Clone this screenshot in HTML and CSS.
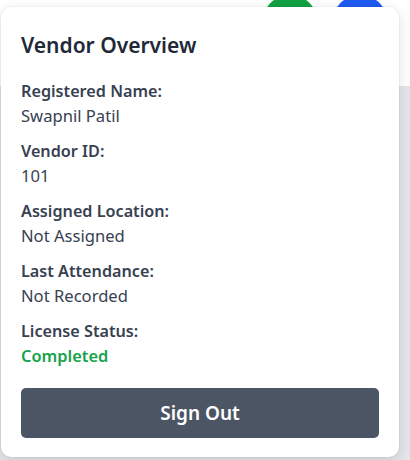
FILE: index.html
```html
<!DOCTYPE html>
<html>
<head>
<meta charset="utf-8">
<link rel="stylesheet" href="styles.css">
</head>
<body>
<div class="app">
  <header class="topbar">
    <span class="avatar avatar-green"></span>
    <span class="avatar avatar-blue"></span>
  </header>
  <main class="content"></main>
  <section class="popover">
    <h2 class="title">Vendor Overview</h2>
    <dl class="details">
      <div class="item"><dt>Registered Name:</dt><dd>Swapnil Patil</dd></div>
      <div class="item"><dt>Vendor ID:</dt><dd>101</dd></div>
      <div class="item"><dt>Assigned Location:</dt><dd>Not Assigned</dd></div>
      <div class="item"><dt>Last Attendance:</dt><dd>Not Recorded</dd></div>
      <div class="item"><dt>License Status:</dt><dd class="ok">Completed</dd></div>
    </dl>
    <button class="signout">Sign Out</button>
  </section>
</div>
</body>
</html>
```
FILE: styles.css
```css
* { box-sizing: border-box; }
html, body { margin: 0; padding: 0; }
body {
  width: 410px;
  height: 460px;
  overflow: hidden;
  font-family: "Noto Sans", "Open Sans", sans-serif;
  background: #ffffff;
}
.app {
  position: relative;
  width: 410px;
  height: 460px;
  display: flex;
  flex-direction: column;
}
.topbar {
  height: 91px;
  margin-top: -5px;
  background: #ffffff;
  display: flex;
  justify-content: flex-end;
  align-items: flex-start;
  gap: 14px;
  padding-right: 22px;
}
.avatar {
  width: 56px;
  height: 56px;
  border-radius: 50%;
  display: block;
}
.avatar-green { background: #12a143; }
.avatar-blue { background: #1f5af0; }
.content {
  flex: 1;
  background: #e4e6ea;
}
.popover {
  position: absolute;
  top: 7px;
  left: 1px;
  width: 398px;
  background: #ffffff;
  border-radius: 10px;
  box-shadow: 0 4px 14px rgba(0,0,0,0.12), 0 0 0 1px rgba(0,0,0,0.03);
  padding: 23px 20px 19px 20px;
  color: #374151;
}
.title {
  margin: 0 0 19px 0;
  font-size: 21px;
  line-height: 30px;
  font-weight: 600;
  color: #1f2937;
}
.details {
  margin: 0;
  display: flex;
  flex-direction: column;
  gap: 11px;
}
.item dt {
  font-size: 16.2px;
  line-height: 24px;
  font-weight: 600;
  color: #374151;
}
.item dd {
  margin: 0;
  font-size: 16.6px;
  line-height: 25px;
  color: #374151;
}
.item dd.ok {
  color: #16a34a;
  font-weight: 600;
  font-size: 16.4px;
}
.signout {
  display: block;
  width: 100%;
  margin-top: 20px;
  height: 50px;
  border: none;
  border-radius: 5px;
  background: #4b5563;
  color: #ffffff;
  font-family: inherit;
  font-size: 19px;
  font-weight: 600;
}
```
